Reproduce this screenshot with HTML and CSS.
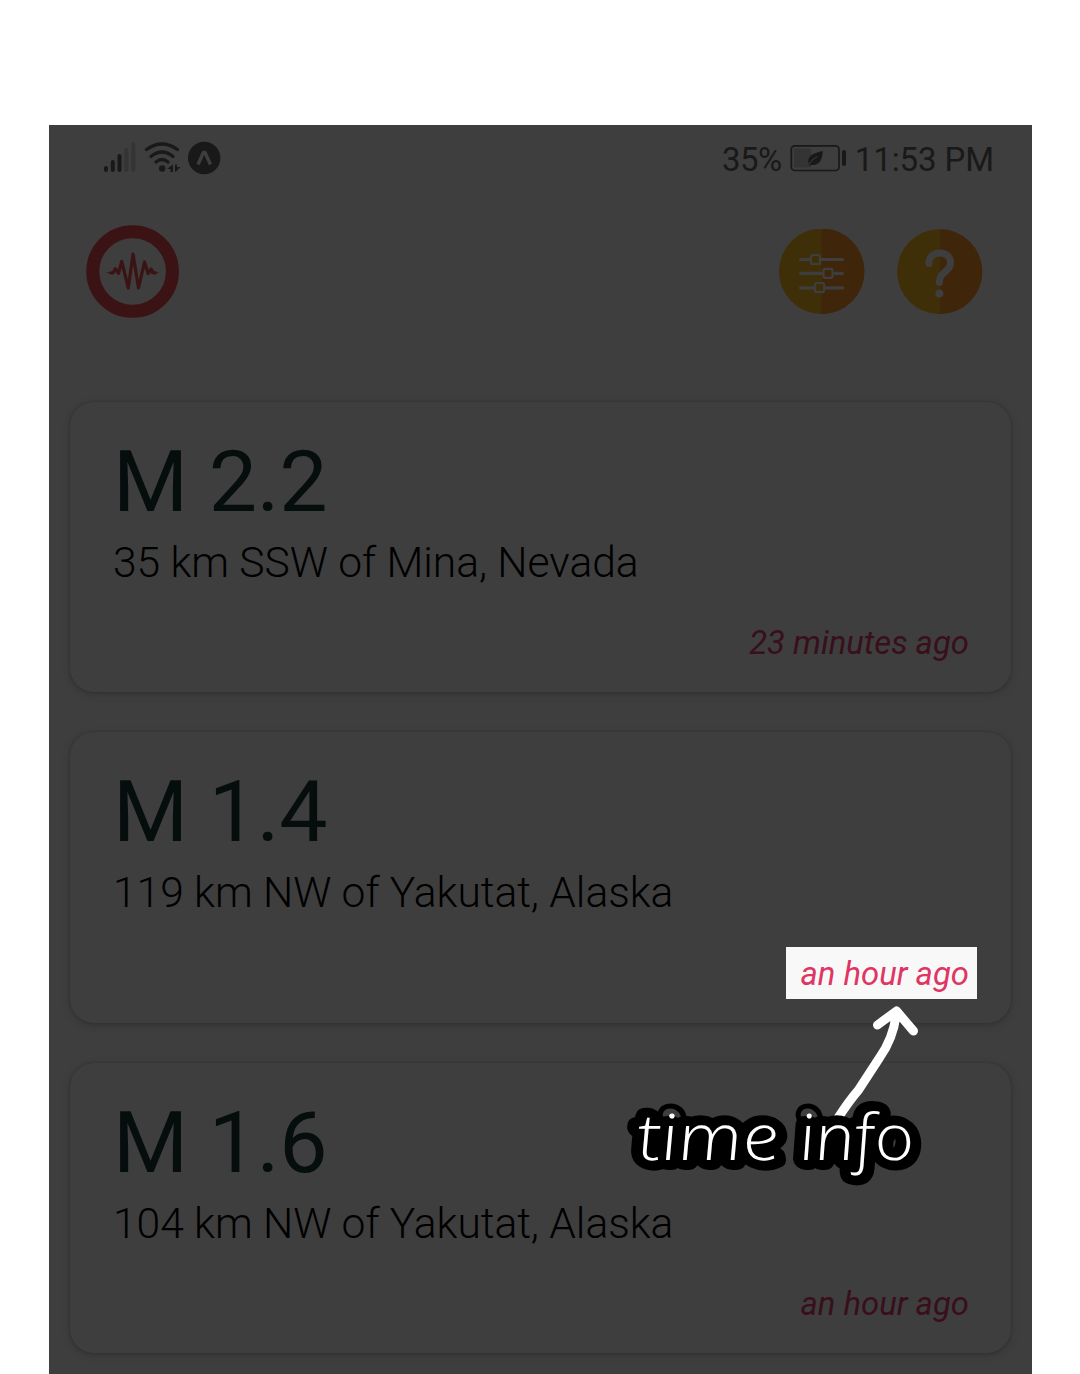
FILE: index.html
```
<!DOCTYPE html>
<html lang="en">
<head>
<meta charset="utf-8">
<title>Earthquakes</title>
<link rel="stylesheet" href="styles.css">
</head>
<body>
<main class="phone">
  <div class="status">
    <svg class="signals" width="120" height="36" viewBox="102 140 120 36" fill="none" stroke="#191919" stroke-linecap="round">
      <path stroke-width="4" d="M106 168v2M112.800 162v8M119.500 156v14"/>
      <path stroke="#343434" stroke-width="4" d="M126.300 150v20M133.300 144.500v25.500"/>
      <path stroke-width="3.200" d="M146.500 149.500Q162 138.500 177.500 149.500M151 156.500Q162 147.500 173 156.500M156 162Q162 157 168 162"/>
      <circle cx="162.200" cy="168.500" r="3.200" fill="#191919" stroke="none"/>
      <path fill="#191919" stroke="none" d="M173 164.500v7.500h-2.500v-3h-3.500zM175 172v-7.500h2v2.500h3.500l-5 5z"/>
      <circle cx="204.200" cy="158" r="16.200" fill="#191919" stroke="none"/>
      <path fill="none" stroke="#3e3e3e" stroke-width="3.400" stroke-linecap="butt" stroke-linejoin="round" d="M198 164.500L203.400 152.500h1.600L210.500 164.500"/>
    </svg>
    <div class="status-right">
      <span class="percent">35%</span>
      <svg width="58" height="30" viewBox="789 144 58 30">
        <rect x="791.300" y="145.800" width="47.700" height="24.700" rx="3.500" fill="none" stroke="#191919" stroke-width="1.700"/>
        <path fill="#343434" d="M794 148.500h17v19h-17z"/>
        <rect x="842" y="150" width="4" height="16" rx="1.800" fill="#191919"/>
        <path fill="#191919" d="M822.700 151c-6 1.500-14 3-14.500 10l.7 5 1.500-1.200c10 1.500 12-6 12.300-13.800z"/>
        <path stroke="#3e3e3e" stroke-width="1" fill="none" d="M808.300 165q3-5.500 9-8.500"/>
      </svg>
      <span>11:53 PM</span>
    </div>
  </div>
  <header class="toolbar">
    <svg width="94" height="94" viewBox="85 225 94 94" fill="none" stroke="#3b1314">
      <circle cx="132.600" cy="271.500" r="39.800" stroke-width="13"/>
      <path fill="#3b1314" stroke="none" d="M105 272.800l9-1v2.200zM160 272.800l-9-1v2.200z"/>
      <path stroke-width="3.200" stroke-linecap="round" stroke-linejoin="round" d="M111 272.800h2l2.500-4 3 4.500 3.300-11.800 6.500 26.500 4.700-34 5.500 34 6-26 3.700 11.500 2.800-4.500 2.500 3.800h2"/>
    </svg>
    <div class="actions">
      <svg width="86" height="86" viewBox="779 229 86 86">
        <circle cx="821.700" cy="271.300" r="42.700" fill="#3f2f08"/>
        <path fill="#3f260b" d="M821.700 228.600a42.700 42.700 0 0 1 0 85.400z"/>
        <g fill="none" stroke="#3e3e3e" stroke-width="3.200" stroke-linecap="round">
          <path d="M800.500 259.500h9M821.500 259.500h21M800.500 273.300h22M834.500 273.300h8M800.500 287.800h13M825.500 287.800h17"/>
          <rect x="811" y="255" width="9" height="9" rx="1.500" stroke-width="2.200"/>
          <rect x="823.500" y="268.800" width="9" height="9" rx="1.500" stroke-width="2.200"/>
          <rect x="815" y="283" width="9" height="9" rx="1.500" stroke-width="2.200"/>
        </g>
      </svg>
      <svg width="86" height="86" viewBox="897 229 86 86">
        <circle cx="939.500" cy="271.700" r="42.400" fill="#3f2f08"/>
        <path fill="#3f260b" d="M940 229.300a42.400 42.400 0 0 1 0 84.800z"/>
        <path fill="none" stroke="#3e3e3e" stroke-width="7" stroke-linecap="round" d="M929 263.500C929 249 950.500 250 950.500 262.500C950.500 272.500 939.300 271 939.300 282.500"/>
        <circle cx="939.400" cy="293.500" r="4" fill="#3e3e3e"/>
      </svg>
    </div>
  </header>
  <section class="list">
    <article class="card">
      <h2>M 2.2</h2>
      <p class="place">35 km SSW of Mina, Nevada</p>
      <p class="time">23 minutes ago</p>
    </article>
    <article class="card">
      <h2>M 1.4</h2>
      <p class="place">119 km NW of Yakutat, Alaska</p>
      <p class="time highlight">an hour ago</p>
    </article>
    <article class="card">
      <h2>M 1.6</h2>
      <p class="place">104 km NW of Yakutat, Alaska</p>
      <p class="time">an hour ago</p>
    </article>
  </section>
  <svg class="callout" width="320" height="200" viewBox="620 990 320 200">
    <path class="arrow" d="M896.500 1012Q894 1037 880 1057Q869 1074 858.500 1090Q849 1101 838 1118M877.500 1025L896.500 1011L913.500 1031"/>
    <g class="note" transform="translate(0 1160) skewX(9)">
      <text x="640" y="0" textLength="142" lengthAdjust="spacingAndGlyphs">time</text>
      <text x="802" y="0" textLength="115" lengthAdjust="spacingAndGlyphs">info</text>
    </g>
  </svg>
</main>
</body>
</html>
```
FILE: styles.css
```
* { box-sizing: border-box; }
body {
  margin: 0;
  height: 1374px;
  padding: 125px 48px 0 49px;
  background: #fff;
  font-family: Roboto, sans-serif;
  overflow: hidden;
}
h2, p { margin: 0; }
svg { display: block; flex: none; }
.phone {
  position: relative;
  height: 1249px;
  background: #3e3e3e;
  overflow: hidden;
}
.status {
  display: flex;
  justify-content: space-between;
  align-items: center;
  height: 66px;
  padding: 0 38px 0 53px;
  color: #191919;
  font-size: 33px;
  white-space: nowrap;
}
.status-right { display: flex; align-items: center; gap: 8px; padding-top: 2px; letter-spacing: -0.1px; }
.percent { letter-spacing: -0.5px; margin-right: -1px; }
.toolbar {
  display: flex;
  justify-content: space-between;
  align-items: center;
  height: 161px;
  margin-bottom: 49.5px;
  padding: 0 49px 0 36px;
}
.actions { display: flex; gap: 32px; }
.list { display: flex; flex-direction: column; gap: 40px; padding: 0 21px; }
.card {
  flex: none;
  display: flex;
  flex-direction: column;
  height: 290.5px;
  padding: 30px 34px 0 43px;
  border-radius: 24px;
  background: #3e3e3e;
  box-shadow: 0 0 2px #303030, 0 2px 6px #323232;
}
.card h2 {
  color: #060d0d;
  font-size: 86px;
  line-height: 100px;
  font-weight: 400;
  letter-spacing: -0.3px;
}
.place { color: #000; font-size: 42.6px; line-height: 60px; font-weight: 300; letter-spacing: -0.05px; }
.time {
  align-self: flex-end;
  margin-top: 24.5px;
  padding: 2px 8px 0 15px;
  color: #380f1b;
  font-size: 32.85px;
  line-height: 50px;
  font-style: italic;
}
.highlight { background: #f8f8f8; color: #df3563; }
.callout { position: absolute; left: 571px; top: 865px; }
.arrow { fill: none; stroke: #fff; stroke-width: 9; stroke-linecap: round; stroke-linejoin: round; }
.note {
  font: italic 300 64px "Open Sans", sans-serif;
  fill: #fff;
  stroke: #000;
  stroke-width: 20px;
  stroke-linejoin: round;
  paint-order: stroke;
}
```
